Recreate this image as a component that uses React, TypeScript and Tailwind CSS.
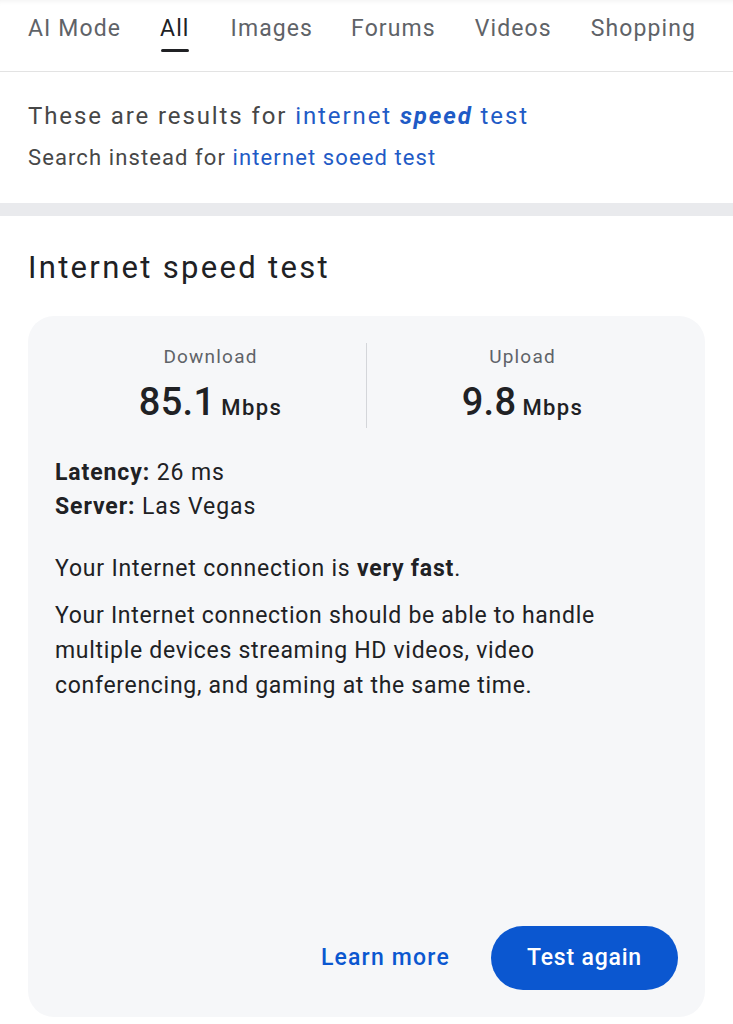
import React from 'react';

const tabs = [
  { t: 'AI Mode', ml: 'ml-[28px]' },
  { t: 'All', ml: 'ml-[39px]' },
  { t: 'Images', ml: 'ml-[41px]' },
  { t: 'Forums', ml: 'ml-[38px]' },
  { t: 'Videos', ml: 'ml-[39px]' },
  { t: 'Shopping', ml: 'ml-[39px]' },
];

const Stat = ({ label, value }: { label: string; value: string }) => {
  return (
    <div className="flex flex-col items-center pt-[2px]">
      <div className="text-[19px] leading-[24px] tracking-[1.2px] text-[#5f6368]">{label}</div>
      <div className="mt-[10px] flex items-baseline text-[#202124]">
        <span className="text-[38px] leading-[46px] font-medium tracking-[0.3px]">{value}</span>
        <span className="ml-[6px] text-[22px] font-medium tracking-[1.4px]">Mbps</span>
      </div>
    </div>
  );
};

const App = () => {
  return (
    <div className="w-[733px] h-[1024px] overflow-hidden bg-white text-[#202124]" style={{ fontFamily: 'Roboto, "Noto Sans", sans-serif' }}>
      {/* tabs */}
      <div className="h-[72px] border-b border-[#e3e3e3] shadow-[inset_0_6px_6px_-6px_rgba(0,0,0,0.08)]">
        <div className="flex pt-[14px]">
          {tabs.map(({ t, ml }) => (
            <div
              key={t}
              className={
                'flex flex-col items-center text-[23px] leading-[30px] tracking-[1.1px] ' + ml + ' ' +
                (t === 'All' ? 'text-[#202124]' : 'text-[#5f6368]')
              }
            >
              <span>{t}</span>
              {t === 'All' && <div className="mt-[5px] h-[3px] w-[28px] rounded-full bg-[#202124]" />}
            </div>
          ))}
        </div>
      </div>

      {/* spelling */}
      <div className="px-[28px] pt-[27px] pb-[30px]">
        <div className="text-[24px] leading-[34px] tracking-[1.9px] text-[#474747]">
          These are results for <span className="text-[#1f5bc6]">internet <b className="italic font-bold">speed</b> test</span>
        </div>
        <div className="mt-[10px] text-[22px] leading-[30px] tracking-[1.1px] text-[#474747]">
          Search instead for <span className="text-[#1f5bc6]">internet soeed test</span>
        </div>
      </div>
      <div className="h-[13px] bg-[#e9eaed]" />

      {/* speed test */}
      <div className="px-[28px] pt-[32px]">
        <h1 className="text-[31px] leading-[40px] tracking-[2.3px] text-[#202124]">Internet speed test</h1>
        <div className="mt-[28px] h-[701px] rounded-[26px] bg-[#f6f7f9] flex flex-col px-[27px]">
          <div className="mt-[27px] grid grid-cols-[1fr_1px_1fr] items-start">
            <Stat label="Download" value="85.1" />
            <div className="bg-[#d4d6da] h-[85px]" />
            <Stat label="Upload" value="9.8" />
          </div>
          <div className="mt-[28px] text-[23px] leading-[34px] tracking-[0.9px] text-[#202124]">
            <div><b className="font-bold">Latency:</b> 26 ms</div>
            <div><b className="font-bold">Server:</b> Las Vegas</div>
          </div>
          <div className="mt-[27px] text-[23px] leading-[35px] tracking-[0.8px] text-[#202124]">
            Your Internet connection is <b className="font-bold">very fast</b>.
          </div>
          <div className="mt-[12px] text-[23px] leading-[35px] tracking-[0.7px] text-[#202124] w-[560px]">
            Your Internet connection should be able to handle multiple devices streaming HD videos, video conferencing, and gaming at the same time.
          </div>
          <div className="mt-auto mb-[27px] flex items-center justify-end gap-[41px]">
            <button className="text-[23px] font-medium tracking-[1.2px] text-[#0b57d0]">Learn more</button>
            <button className="h-[64px] w-[187px] rounded-full bg-[#0b57d0] text-[23px] font-medium tracking-[0.8px] text-white">Test again</button>
          </div>
        </div>
      </div>
    </div>
  );
};

export default App;
